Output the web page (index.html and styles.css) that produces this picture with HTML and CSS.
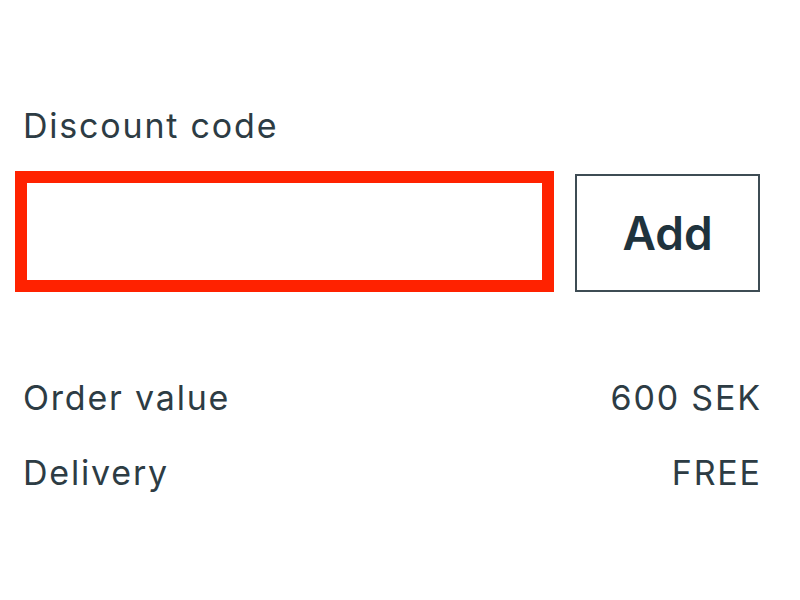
FILE: index.html
```html
<!DOCTYPE html>
<html lang="en">
<head>
    <meta charset="UTF-8">
    <meta name="viewport" content="width=device-width, initial-scale=1.0">
    <title>Discount code</title>
    <link rel="stylesheet" href="styles.css">
</head>
<body>

    <div class="summary">
        <!-- Discount code -->
        <label class="code-label" for="code">Discount code</label>
        <div class="code-row">
            <input type="text" id="code" class="code-input">
            <button class="add-btn">Add</button>
        </div>

        <!-- Totals -->
        <div class="total-row">
            <span>Order value</span>
            <span>600 SEK</span>
        </div>
        <div class="total-row">
            <span>Delivery</span>
            <span>FREE</span>
        </div>
    </div>

</body>
</html>
```

FILE: styles.css
```css
body {
    margin: 0;
    font-family: Inter, "Open Sans", sans-serif;
    color: #2d3c44;
    background-color: #fff;
}
.summary {
    padding: 105px 40px 0 15px;
}
.code-label {
    display: block;
    margin-left: 8px;
    font-size: 34px;
    line-height: 42px;
    letter-spacing: 1.8px;
}
.code-row {
    display: flex;
    align-items: flex-end;
    gap: 21px;
    margin-top: 24px;
}
.code-input {
    flex: 1;
    box-sizing: border-box;
    height: 121px;
    margin: 0;
    border: 12px solid #ff2200;
    outline: none;
    font-size: 34px;
}
.add-btn {
    box-sizing: border-box;
    width: 185px;
    height: 118px;
    padding: 0;
    border: 2px solid #3e4c54;
    background-color: #fff;
    color: #1f333d;
    font-family: inherit;
    font-size: 46px;
    font-weight: 600;
}
.total-row {
    display: flex;
    justify-content: space-between;
    padding-left: 8px;
    font-size: 34px;
    line-height: 42px;
    letter-spacing: 1.8px;
    margin-top: 33px;
}
.total-row span:last-child {
    margin-right: -1.8px;
}
.code-row + .total-row {
    margin-top: 85px;
}
```
